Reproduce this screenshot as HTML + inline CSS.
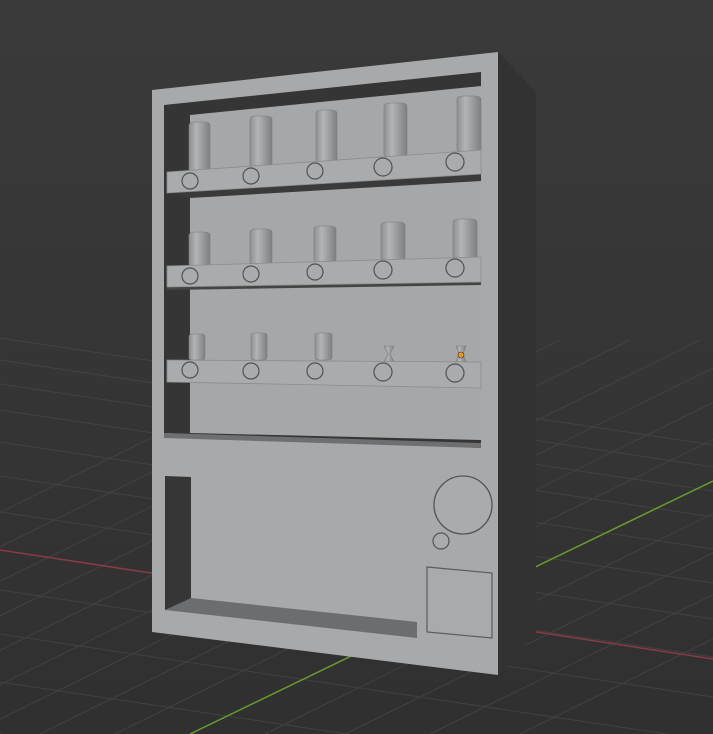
<!DOCTYPE html>
<html><head><meta charset="utf-8"><style>html,body{margin:0;padding:0;background:#3d3d3d;overflow:hidden;width:713px;height:734px}svg{display:block;overflow:hidden;position:absolute;left:0;top:0}</style></head>
<body>
<svg width="713" height="734" viewBox="0 0 713 734" xmlns="http://www.w3.org/2000/svg">
<defs>
<linearGradient id="bg" x1="0" y1="0" x2="0" y2="1"><stop offset="0" stop-color="#3a3a3a"/><stop offset="1" stop-color="#303030"/></linearGradient>
<linearGradient id="can" x1="0" y1="0" x2="1" y2="0"><stop offset="0" stop-color="#8e9091"/><stop offset="0.35" stop-color="#b2b4b5"/><stop offset="1" stop-color="#7e8081"/></linearGradient>
<clipPath id="floor"><rect x="0" y="300" width="713" height="434"/></clipPath>
</defs>
<rect width="713" height="734" fill="url(#bg)"/>
<g clip-path="url(#floor)" stroke="#474747" stroke-width="1" opacity="0.75">
<line x1="-200" y1="380" x2="900" y2="545"/><line x1="-200" y1="412" x2="900" y2="577"/><line x1="-200" y1="446" x2="900" y2="611"/><line x1="-200" y1="482" x2="900" y2="647"/><line x1="-200" y1="520" x2="900" y2="685"/><line x1="-200" y1="560" x2="900" y2="725"/><line x1="-200" y1="604" x2="900" y2="769"/><line x1="-200" y1="652" x2="900" y2="817"/><line x1="-200" y1="354" x2="900" y2="519"/><line x1="-200" y1="330" x2="900" y2="495"/><line x1="-200" y1="308" x2="900" y2="473"/><line x1="-200" y1="704" x2="900" y2="869"/>
<line x1="-100" y1="734" x2="700" y2="340"/><line x1="-30" y1="734" x2="770" y2="340"/><line x1="40" y1="734" x2="840" y2="340"/><line x1="115" y1="734" x2="915" y2="340"/><line x1="265" y1="734" x2="1065" y2="340"/><line x1="345" y1="734" x2="1145" y2="340"/><line x1="430" y1="734" x2="1230" y2="340"/><line x1="-170" y1="734" x2="630" y2="340"/><line x1="-240" y1="734" x2="560" y2="340"/><line x1="-310" y1="734" x2="490" y2="340"/><line x1="-380" y1="734" x2="420" y2="340"/><line x1="-450" y1="734" x2="350" y2="340"/><line x1="520" y1="734" x2="1320" y2="340"/>
</g>
<line x1="0" y1="550" x2="713" y2="659" stroke="#8a3a42" stroke-width="1.5"/>
<line x1="190" y1="734" x2="713" y2="481" stroke="#6a9a2e" stroke-width="1.5"/>
<polygon points="498,52 536,92 536,634 498,675" fill="#323232"/>
<polygon points="152,90 498,52 498,675 152,632" fill="#a7a9aa"/>
<polygon points="164,105 481,72 481,448 164,433" fill="#353535"/>
<polygon points="190,115 481,86 481,440 190,433" fill="#a5a7a8"/>
<polygon points="164,433 481,443 481,448 164,438" fill="#6e6f70"/>
<polygon points="167,193 481,174 481,181 190,198" fill="#3a3a3a"/>
<g fill="url(#can)" stroke="#7a7c7d" stroke-width="0.6">
<rect x="189" y="122" width="21" height="52" rx="6" ry="3"/>
<rect x="250" y="116" width="22" height="52" rx="6" ry="3"/>
<rect x="316" y="110" width="21" height="52" rx="6" ry="3"/>
<rect x="384" y="103" width="23" height="54" rx="6" ry="3"/>
<rect x="457" y="96" width="24" height="56" rx="6" ry="3"/>
</g>
<polygon points="167,172 481,150 481,174 167,193" fill="#a9abac" stroke="#8a8c8d" stroke-width="0.8"/>
<polygon points="167,287 481,282 481,285 167,290" fill="#444"/>
<g fill="url(#can)" stroke="#7a7c7d" stroke-width="0.6">
<rect x="189" y="232" width="21" height="36" rx="6" ry="3"/>
<rect x="250" y="229" width="22" height="36" rx="6" ry="3"/>
<rect x="314" y="226" width="22" height="37" rx="6" ry="3"/>
<rect x="381" y="222" width="24" height="39" rx="6" ry="3"/>
<rect x="453" y="219" width="24" height="40" rx="6" ry="3"/>
</g>
<polygon points="167,266 481,257 481,282 167,287" fill="#a9abac" stroke="#8a8c8d" stroke-width="0.8"/>
<g fill="url(#can)" stroke="#7a7c7d" stroke-width="0.6">
<rect x="189" y="334" width="16" height="26" rx="4" ry="2"/>
<rect x="251" y="333" width="16" height="27" rx="4" ry="2"/>
<rect x="315" y="333" width="17" height="27" rx="4" ry="2"/>
<polygon points="384,346 394,346 390,354 394,362 384,362 388,354"/>
<polygon points="456,346 466,346 463,354 466,362 456,362 459,354"/>
</g>
<circle cx="461" cy="355" r="3" fill="#e8962a" stroke="#333" stroke-width="0.6"/>
<polygon points="167,360 481,362 481,388 167,382" fill="#a9abac" stroke="#8a8c8d" stroke-width="0.8"/>
<g fill="#a9abac" stroke="#505253" stroke-width="1.2">
<circle cx="190" cy="181" r="8"/><circle cx="251" cy="176" r="8"/><circle cx="315" cy="171" r="8"/><circle cx="383" cy="167" r="9"/><circle cx="455" cy="162" r="9"/>
<circle cx="190" cy="276" r="8"/><circle cx="251" cy="274" r="8"/><circle cx="315" cy="272" r="8"/><circle cx="383" cy="270" r="9"/><circle cx="455" cy="268" r="9"/>
<circle cx="190" cy="370" r="8"/><circle cx="251" cy="371" r="8"/><circle cx="315" cy="371" r="8"/><circle cx="383" cy="372" r="9"/><circle cx="455" cy="373" r="9"/>
</g>
<polygon points="165,476 191,477 191,600 165,610" fill="#363636"/>
<polygon points="165,610 191,598 417,622 417,638" fill="#6c6d6e"/>
<circle cx="463" cy="505" r="29" fill="#a9abac" stroke="#555" stroke-width="1.3"/>
<circle cx="441" cy="541" r="8" fill="#a9abac" stroke="#555" stroke-width="1.2"/>
<polygon points="427,567 492,573 492,638 427,632" fill="#a8aaab" stroke="#5a5c5d" stroke-width="1.2"/>
</svg>
</body></html>
